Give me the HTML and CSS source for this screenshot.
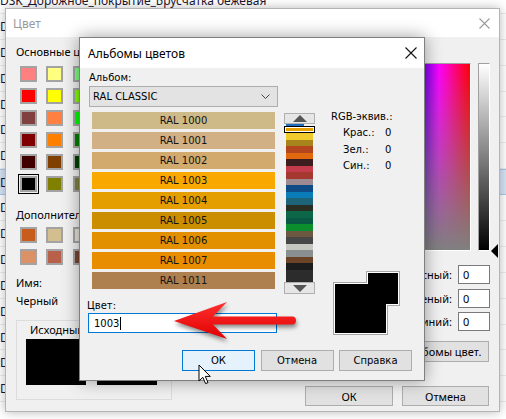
FILE: index.html
```html
<!DOCTYPE html>
<html lang="ru">
<head>
<meta charset="utf-8">
<title>Альбомы цветов</title>
<link rel="stylesheet" href="styles.css">
</head>
<body>
<div class="desk">
  <div class="list">
    <div class="row">DSK_Дорожное_покрытие_Брусчатка бежевая</div>
    <div class="row">DSK_Дорожное_покрытие_Брусчатка серая</div>
    <div class="row">DSK_Дорожное_покрытие_Асфальт</div>
    <div class="row">DSK_Дорожное_покрытие_Плитка</div>
    <div class="row">DSK_Дерево_Дуб</div>
    <div class="row">DSK_Дерево_Сосна</div>
    <div class="row">DSK_Дерево_Бук</div>
    <div class="row sel">DSK_Декор_Черный</div>
    <div class="row">DSK_Декор_Белый</div>
    <div class="row">DSK_Декор_Серый</div>
    <div class="row">DSK_Декор_Бежевый</div>
    <div class="row">DSK_Декор_Коричневый</div>
    <div class="row">DSK_Декор_Красный</div>
    <div class="row">DSK_Декор_Зеленый</div>
    <div class="row">DSK_Декор_Синий</div>
    <div class="row">DSK_Жидкость_Вода</div>
  </div>

  <div class="win cdlg">
    <div class="titlebar">
      <span class="ttl inactive">Цвет</span>
      <svg class="xbtn" width="11" height="11" viewBox="0 0 11 11"><path d="M0.5 0.5 L10.5 10.5 M10.5 0.5 L0.5 10.5" stroke="#9a9a9a" stroke-width="1.1" fill="none"/></svg>
    </div>
    <div class="cbody">
      <div class="cleft">
        <div class="lbl first">Основные цвета:</div>
        <div class="swgrid basic">
          <i style="background:#ff8080"></i><i style="background:#ffff80"></i><i style="background:#80ff80"></i><i style="background:#00ff80"></i><i style="background:#80ffff"></i><i style="background:#0080ff"></i><i style="background:#ff80c0"></i><i style="background:#ff80ff"></i>
          <i style="background:#ff0000"></i><i style="background:#ffff00"></i><i style="background:#80ff00"></i><i style="background:#00ff40"></i><i style="background:#00ffff"></i><i style="background:#0080c0"></i><i style="background:#8080c0"></i><i style="background:#ff00ff"></i>
          <i style="background:#804040"></i><i style="background:#ff8040"></i><i style="background:#00ff00"></i><i style="background:#008080"></i><i style="background:#004080"></i><i style="background:#8080ff"></i><i style="background:#800040"></i><i style="background:#ff0080"></i>
          <i style="background:#800000"></i><i style="background:#ff8000"></i><i style="background:#008000"></i><i style="background:#008040"></i><i style="background:#0000ff"></i><i style="background:#0000a0"></i><i style="background:#800080"></i><i style="background:#8000ff"></i>
          <i style="background:#400000"></i><i style="background:#804000"></i><i style="background:#004000"></i><i style="background:#004040"></i><i style="background:#000080"></i><i style="background:#000040"></i><i style="background:#400040"></i><i style="background:#400080"></i>
          <i class="cur" style="background:#000000"></i><i style="background:#808000"></i><i style="background:#808040"></i><i style="background:#808080"></i><i style="background:#408080"></i><i style="background:#c0c0c0"></i><i style="background:#400040"></i><i style="background:#ffffff"></i>
        </div>
        <div class="lbl l2">Дополнительные цвета:</div>
        <div class="swgrid custom">
          <i style="background:#c85c1c"></i><i style="background:#d2be8e"></i><i style="background:#e6e2d8"></i><i style="background:#fff"></i><i style="background:#fff"></i><i style="background:#fff"></i><i style="background:#fff"></i><i style="background:#fff"></i>
          <i style="background:#dc9066"></i><i style="background:#b8604a"></i><i style="background:#7c4432"></i><i style="background:#fff"></i><i style="background:#fff"></i><i style="background:#fff"></i><i style="background:#fff"></i><i style="background:#fff"></i>
        </div>
        <div class="lbl l3">Имя:</div>
        <div class="lbl l4">Черный</div>
        <div class="group">
          <div class="glabels"><span>Исходный</span><span>Текущий</span></div>
          <div class="gsw"><div class="big"></div><div class="big"></div></div>
        </div>
      </div>
      <div class="cright">
        <div class="specrow">
          <div class="spectrum"></div>
          <div class="lum"></div>
          <div class="lumarrow"></div>
        </div>
        <div class="field f1"><span>Красный:</span><div class="inp">0</div></div>
        <div class="field f2"><span>Зеленый:</span><div class="inp">0</div></div>
        <div class="field f3"><span>Синий:</span><div class="inp">0</div></div>
        <div class="btn albums">Альбомы цвет.</div>
        <div class="cbtns"><div class="btn ok1">ОК</div><div class="btn cancel1">Отмена</div></div>
      </div>
    </div>
  </div>

  <div class="win adlg">
    <div class="titlebar atitle">
      <span class="ttl">Альбомы цветов</span>
      <svg class="xbtn" width="12" height="12" viewBox="0 0 12 12"><path d="M0.5 0.5 L11.5 11.5 M11.5 0.5 L0.5 11.5" stroke="#111" stroke-width="1.1" fill="none"/></svg>
    </div>
    <div class="abody">
      <div class="atop">
        <div class="aleft">
          <div class="albl">Альбом:</div>
          <div class="combo"><span>RAL CLASSIC</span>
            <svg width="9" height="5" viewBox="0 0 9 5"><path d="M0.5 0.5 L4.5 4.5 L8.5 0.5" stroke="#444" fill="none"/></svg>
          </div>
          <div class="ral">
            <div class="ri" style="background:#cdba88">RAL 1000</div>
            <div class="ri" style="background:#d0b084">RAL 1001</div>
            <div class="ri" style="background:#d2aa6d">RAL 1002</div>
            <div class="ri" style="background:#f9a800">RAL 1003</div>
            <div class="ri" style="background:#e49e00">RAL 1004</div>
            <div class="ri" style="background:#cb8e00">RAL 1005</div>
            <div class="ri" style="background:#e29000">RAL 1006</div>
            <div class="ri" style="background:#e88c00">RAL 1007</div>
            <div class="ri" style="background:#af804f">RAL 1011</div>
          </div>
          <div class="albl clr">Цвет:</div>
          <div class="cinput">1003<span class="caret"></span></div>
        </div>
        <div class="strip">
          <div class="sbtn"><svg width="14" height="7" viewBox="0 0 14 7"><path d="M7 0 L14 7 L0 7 Z" fill="#555"/></svg></div>
          <div class="sview">
            <div class="st prev"></div>
            <div class="st selst"><div></div></div>
            <div class="st" style="background:#f0ca2c"></div>
            <div class="st" style="background:#a8851c"></div>
            <div class="st" style="background:#b4461e"></div>
            <div class="st" style="background:#e0680e"></div>
            <div class="st" style="background:#3c1e20"></div>
            <div class="st" style="background:#c43c4c"></div>
            <div class="st" style="background:#a5392f"></div>
            <div class="st" style="background:#9e8a92"></div>
            <div class="st" style="background:#0f4c86"></div>
            <div class="st" style="background:#0a7cb8"></div>
            <div class="st" style="background:#1e6478"></div>
            <div class="st" style="background:#2a2e22"></div>
            <div class="st" style="background:#0c6648"></div>
            <div class="st" style="background:#0a5944"></div>
            <div class="st" style="background:#0a8e2e"></div>
            <div class="st" style="background:#6c5840"></div>
            <div class="st" style="background:#474747"></div>
            <div class="st" style="background:#c6c7c0"></div>
            <div class="st" style="background:#8a8f90"></div>
            <div class="st" style="background:#6b4428"></div>
            <div class="st" style="background:#1d1d1d"></div>
            <div class="st" style="background:#2c2c2c"></div>
            <div class="st" style="background:#2c2c2c"></div>
          </div>
          <div class="sbtn down"><svg width="14" height="7" viewBox="0 0 14 7"><path d="M0 0 L14 0 L7 7 Z" fill="#555"/></svg></div>
        </div>
        <div class="info">
          <div class="rgbh">RGB-эквив.:</div>
          <div class="rgbrows">
            <div class="rr"><span>Крас.:</span><span>0</span></div>
            <div class="rr"><span>Зел.:</span><span>0</span></div>
            <div class="rr"><span>Син.:</span><span>0</span></div>
          </div>
          <svg class="comp" width="67" height="64" viewBox="0 0 67 64">
            <polygon points="0,11 33,11 33,0 67,0 67,35 55,35 55,64 0,64" fill="#a6a6a6"/>
            <polygon points="1,12 34,12 34,1 66,1 66,34 54,34 54,63 1,63" fill="#ffffff"/>
            <polygon points="2,13 35,13 35,2 65,2 65,33 53,33 53,62 2,62" fill="#000000"/>
          </svg>
        </div>
      </div>
      <div class="abtns">
        <div class="btn ok2">ОК</div>
        <div class="btn">Отмена</div>
        <div class="btn">Справка</div>
      </div>
    </div>
  </div>

  <svg class="arrow" width="150" height="62" viewBox="0 0 150 62">
    <defs>
      <linearGradient id="rg" x1="0" y1="0" x2="0" y2="1">
        <stop offset="0" stop-color="#ff3030"/>
        <stop offset="1" stop-color="#e00000"/>
      </linearGradient>
    </defs>
    <path d="M14 31 L67 12 L53 26.5 L132 26.5 A4 4 0 0 1 132 34.5 L53 34.5 L67 49 Z" fill="url(#rg)"/>
  </svg>

  <svg class="cursor" width="14" height="21" viewBox="0 0 14 21">
    <path d="M1 1 L1 17 L4.8 13.3 L7.6 19.6 L10 18.6 L7.3 12.4 L12.3 12.4 Z" fill="#fff" stroke="#000" stroke-width="1" stroke-linejoin="miter"/>
  </svg>
</div>
</body>
</html>
```

FILE: styles.css
```css
* { box-sizing: border-box; }
html, body { margin: 0; padding: 0; }
body {
  width: 506px;
  height: 419px;
  overflow: hidden;
  background: #ffffff;
  font-family: "Noto Sans", "DejaVu Sans", sans-serif;
}
.desk { position: relative; width: 506px; height: 419px; overflow: hidden; }

/* background list */
.list { margin-top: -12px; font-size: 12px; color: #1d1530; }
.row {
  height: 25.9px;
  line-height: 25px;
  white-space: nowrap;
  border-bottom: 1px solid #ececec;
}
.row.sel { background: #d6e4f5; border-top: 1px solid #a9c6ea; border-bottom-color: #a9c6ea; }

/* windows */
.win { position: absolute; background: #f0f0f0; }
.titlebar {
  background: #ffffff;
  display: flex;
  align-items: center;
  justify-content: space-between;
}
.ttl { font-size: 12px; color: #000; }
.ttl.inactive { color: #9a9a9a; }
.xbtn { display: block; }

/* colour dialog */
.cdlg {
  left: 5px; top: 8px; width: 495px; height: 404px;
  border: 1px solid #b4b4b4;
  box-shadow: 0 0 10px rgba(0,0,0,0.28);
}
.cdlg .titlebar { height: 28px; padding: 0 9px 0 7px; }
.cbody { display: flex; padding-left: 10px; font-size: 11px; color: #000; }
.cleft { width: 160px; flex: none; display: flex; flex-direction: column; }
.lbl { height: 14px; line-height: 14px; white-space: nowrap; }
.lbl.first { margin-top: 8px; }
.lbl.l2 { margin-top: 16px; }
.lbl.l3 { margin-top: 11px; }
.lbl.l4 { margin-top: 4px; }
.swgrid {
  display: grid;
  grid-template-columns: repeat(8, 17px);
  grid-auto-rows: 16px;
  column-gap: 9.3px;
  row-gap: 6px;
  margin: 7px 0 0 4px;
}
.swgrid.custom { margin-top: 5px; }
.swgrid i { display: block; border: 2px solid #a3a3a3; }
.swgrid i.cur { outline: 1px solid #000; outline-offset: 1px; }
.group {
  margin-top: 12px;
  width: 156px; height: 80px;
  border: 1px solid #dcdcdc;
  padding: 2px 0 0 9px;
}
.glabels { display: flex; gap: 35px; padding-left: 4px; height: 14px; line-height: 14px; }
.gsw { display: flex; gap: 11px; margin-top: 2px; }
.gsw .big { width: 60px; height: 46px; background: #000; }

.cright { width: 213px; flex: none; margin-left: 109px; display: flex; flex-direction: column; }
.specrow { display: flex; align-items: flex-start; margin-top: 26px; }
.spectrum {
  width: 186px; height: 188px;
  border: 1px solid; border-color: #a0a0a0 #ffffff #ffffff #a0a0a0;
  background:
    linear-gradient(to bottom, rgba(128,128,128,0), #808080),
    linear-gradient(to right, #ff0000, #ffff00, #00ff00, #00ffff, #0000ff, #ff00ff, #ff0000);
}
.lum {
  width: 12px; height: 188px; margin-left: 7px;
  border: 1px solid; border-color: #a0a0a0 #ffffff #ffffff #a0a0a0;
  background: linear-gradient(to bottom, #ffffff, #000000);
}
.lumarrow {
  width: 0; height: 0; margin: 181px 0 0 1px;
  border-right: 7px solid #000;
  border-top: 7px solid transparent;
  border-bottom: 7px solid transparent;
}
.field { display: flex; justify-content: flex-end; align-items: center; padding-right: 8px; height: 19px; }
.field span { margin-right: 6px; }
.field.f1 { margin-top: 7px; }
.field.f2 { margin-top: 5px; }
.field.f3 { margin-top: 4px; }
.inp {
  width: 32px; height: 19px; background: #fff;
  border: 1px solid #7a7a7a; padding-left: 4px; line-height: 17px;
}
.btn {
  background: #e1e1e1; border: 1px solid #adadad;
  display: flex; align-items: center; justify-content: center;
  white-space: nowrap;
}
.albums { align-self: flex-end; margin: 10px 9px 0 0; width: 94px; height: 21px; }
.cbtns { display: flex; justify-content: flex-end; gap: 9px; padding-right: 9px; margin-top: 24px; }
.ok1 { width: 88px; height: 20px; }
.cancel1 { width: 87px; height: 20px; }

/* album dialog */
.adlg {
  left: 79px; top: 37px; width: 346px; height: 344px;
  border: 1px solid #808080;
  box-shadow: 0 0 16px rgba(0,0,0,0.38);
  font-family: "DejaVu Sans", sans-serif;
  font-size: 10px;
  color: #000;
}
.atitle { height: 30px; padding: 0 7px 0 8px; }
.atitle .ttl { font-family: "Noto Sans", sans-serif; font-size: 12px; }
.abody { display: flex; flex-direction: column; }
.atop { display: flex; align-items: flex-start; height: 265px; }
.aleft { width: 198px; flex: none; padding-left: 9px; display: flex; flex-direction: column; }
.albl { height: 14px; line-height: 14px; margin-top: 3px; }
.albl.clr { margin: 10px 0 0 -2px; }
.combo {
  margin-top: 1px; width: 189px; height: 21px;
  background: #e3e3e3; border: 1px solid #adadad;
  display: flex; align-items: center; justify-content: space-between;
  padding: 0 7px 0 3px;
}
.combo svg { display: block; }
.ral { margin: 5px 0 0 3px; width: 183px; display: flex; flex-direction: column; gap: 3px; }
.ri { height: 17px; line-height: 17px; text-align: center; color: #141414; }
.cinput {
  margin-left: -1px; width: 189px; height: 20px;
  background: #fff; border: 1px solid #0078d7;
  padding-left: 5px; display: flex; align-items: center;
}
.caret { display: inline-block; width: 1px; height: 13px; background: #000; margin-left: 1px; }

.strip { margin: 45px 0 0 6px; width: 31px; flex: none; }
.sbtn {
  height: 11px; background: #e6e6e6; border: 1px solid #b0b0b0;
  display: flex; align-items: center; justify-content: center;
}
.sbtn.down { height: 12px; }
.sbtn svg { display: block; }
.sview { height: 158px; overflow: hidden; }
.st { height: 6.5px; margin: 0 2px; }
.st.prev { height: 2px; background: #1f6cc0; margin-right: 11px; }
.st.selst { height: 7px; margin: 0; border: 1px solid #000; background: #fff; padding: 1px; }
.st.selst div { height: 100%; background: #e8a000; }

.info { margin: 42px 0 0 16px; display: flex; flex-direction: column; }
.rgbh { height: 14px; line-height: 14px; white-space: nowrap; }
.rgbrows { margin-top: 1px; }
.rr { display: flex; height: 16.5px; line-height: 16.5px; padding-left: 12px; }
.rr span:first-child { width: 42px; }
.comp { display: block; margin: 96px 0 0 2px; }

.abtns { display: flex; justify-content: flex-end; gap: 5.5px; padding-right: 12px; margin-top: 17px; }
.abtns .btn { width: 73px; height: 21px; }
.abtns .ok2 { background: #e5f1fb; border-color: #0078d7; }

/* overlays */
.arrow {
  position: absolute; left: 160px; top: 290px;
  filter: drop-shadow(1px 3px 2px rgba(0,0,0,0.45));
}
.cursor { position: absolute; left: 198px; top: 364px; }
```
